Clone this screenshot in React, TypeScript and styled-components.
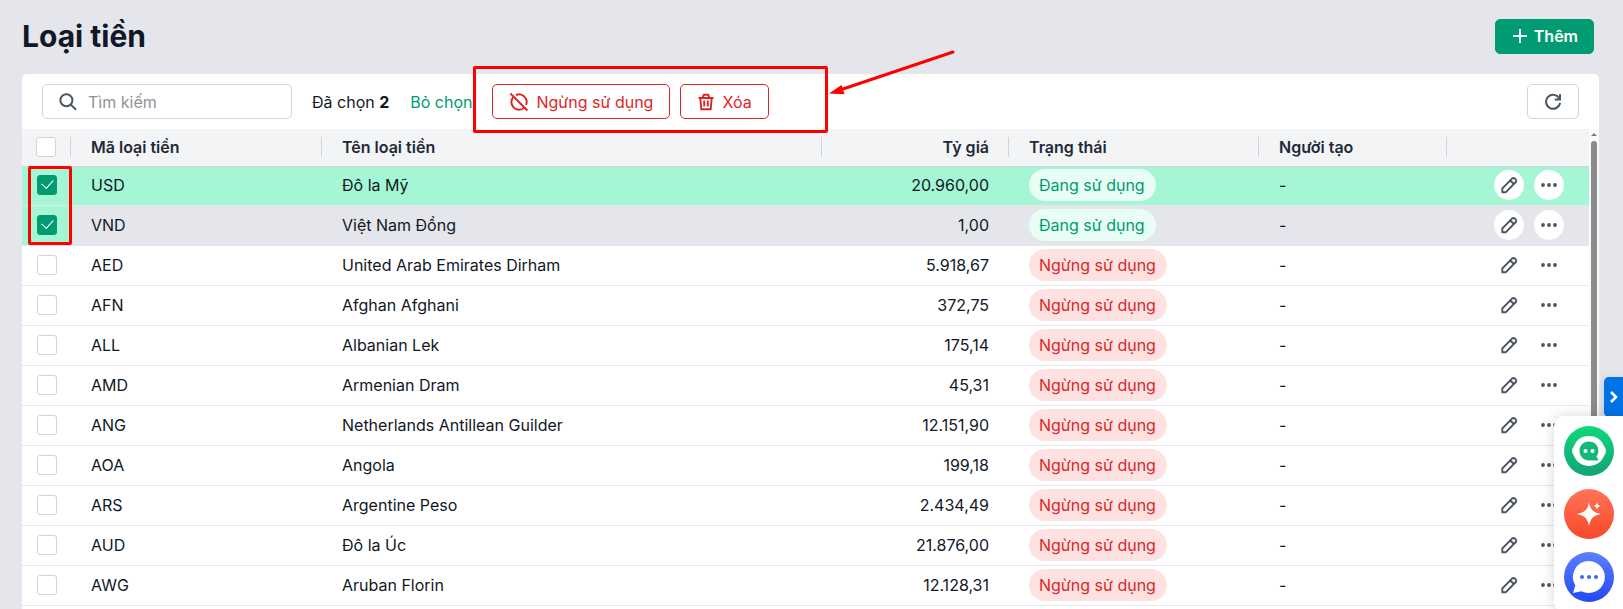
import React, { useState } from 'react';
import styled, { createGlobalStyle, css } from 'styled-components';

const GlobalStyle = createGlobalStyle`
  *, *::before, *::after { box-sizing: border-box; }
  html, body { margin: 0; height: 100%; overflow: hidden; background: #e5e6eb; }
  #root { height: 100%; }
  body, button, input {
    font-family: Inter, "Noto Sans", sans-serif;
    font-size: 16px;
    color: #111827;
  }
`;

const Page = styled.div`
  position: relative;
  display: flex;
  flex-direction: column;
  height: 100%;
  overflow: hidden;
  padding: 0 24px 0 22px;
`;

const PageHeader = styled.header`
  display: flex;
  flex: none;
  align-items: center;
  justify-content: space-between;
  height: 74px;
  padding: 0 5px 2px 0;
`;

const Title = styled.h1`
  margin: 0;
  font-size: 30px;
  line-height: 36px;
  font-weight: 700;
`;

const Button = styled.button<{ $kind: 'primary' | 'danger' | 'plain' }>`
  display: inline-flex;
  align-items: center;
  justify-content: center;
  gap: 7px;
  height: 35px;
  padding: 0 15px;
  border: 1px solid;
  border-radius: 5px;
  background: #fff;
  line-height: 20px;
  cursor: pointer;
  ${({ $kind }) => $kind === 'primary' && css`
    border-color: #009b72;
    background: #009b72;
    color: #fff;
    font-weight: 600;
  `}
  ${({ $kind }) => $kind === 'danger' && css`
    padding: 0 16px;
    border-color: #dc2626;
    color: #dc2626;
  `}
  ${({ $kind }) => $kind === 'plain' && css`
    border-color: #d1d5db;
    color: #4b5563;
  `}
`;

const Panel = styled.main`
  display: flex;
  flex: 1;
  flex-direction: column;
  min-height: 0;
  border-radius: 5px 5px 0 0;
  background: #fff;
  overflow: hidden;
`;

const Toolbar = styled.div`
  display: flex;
  flex: none;
  align-items: center;
  height: 55px;
  padding: 0 20px;
`;

const SearchBox = styled.label`
  display: flex;
  align-items: center;
  gap: 10px;
  width: 250px;
  height: 35px;
  padding: 0 15px;
  border: 1px solid #d1d5db;
  border-radius: 5px;
  color: #4b5563;
`;

const SearchInput = styled.input`
  flex: 1;
  min-width: 0;
  padding: 0;
  border: 0;
  outline: 0;
  background: none;
  &::placeholder { color: #8f9399; opacity: 1; }
`;

const Selection = styled.span`
  margin-left: 20px;
  b { font-weight: 700; }
`;

const ClearLink = styled.a`
  margin: 0 20px 0 21px;
  color: #009b72;
  text-decoration: none;
`;

const BulkActions = styled.div`
  display: flex;
  gap: 10px;
  margin-right: auto;
`;

const Scroller = styled.div`
  display: flex;
  flex: 1;
  min-height: 0;
`;

const TableArea = styled.div`
  flex: 1;
  min-width: 0;
  overflow: hidden;
`;

const Table = styled.table`
  width: 100%;
  table-layout: fixed;
  border-spacing: 0;
`;

const Col = styled.col<{ $width?: number }>`
  ${({ $width }) => $width && `width: ${$width}px;`}
`;

const HeadCell = styled.th<{ $right?: boolean; $check?: boolean; $last?: boolean }>`
  position: relative;
  height: 37px;
  padding: 0 ${({ $check }) => ($check ? '14px' : '20px')} 2px;
  background: #f2f4f6;
  box-shadow: 0 1px #d1d5db;
  color: #1f2937;
  font-weight: 600;
  line-height: 20px;
  text-align: ${({ $right }) => ($right ? 'right' : 'left')};
  white-space: nowrap;
  ${({ $last }) => !$last && css`
    &::after {
      content: '';
      position: absolute;
      top: 8px;
      right: 0;
      width: 1px;
      height: 20px;
      background: #d1d5db;
    }
  `}
`;

const Cell = styled.td<{ $right?: boolean; $check?: boolean }>`
  height: 40px;
  padding: 0 ${({ $check }) => ($check ? '15px' : '20px')} 1px;
  border-bottom: 1px solid #e5e7eb;
  line-height: 20px;
  text-align: ${({ $right }) => ($right ? 'right' : 'left')};
  white-space: nowrap;
`;

const Row = styled.tr<{ $tone?: 'selected' | 'hover' }>`
  ${({ $tone }) => $tone === 'selected' && css`background: #a4f6d4;`}
  ${({ $tone }) => $tone === 'hover' && css`
    background: #e5e6eb;
    ${Cell}:first-child { background: #a4f6d4; }
  `}
`;

const Check = styled.input`
  appearance: none;
  display: block;
  width: 20px;
  height: 20px;
  margin: 0;
  border: 1px solid #d1d5db;
  border-radius: 3px;
  background: #fff;
  &:checked { border-color: #009b72; background: #009b72; }
  &:checked::after {
    content: '';
    display: block;
    width: 7px;
    height: 11px;
    margin: 1px 0 0 6px;
    border: solid #fff;
    border-width: 0 1px 1px 0;
    transform: rotate(42deg);
  }
`;

const Badge = styled.span<{ $active: boolean }>`
  display: block;
  width: max-content;
  padding: 6px 11px 6px 10px;
  border-radius: 16px;
  background: ${({ $active }) => ($active ? '#e8fdf4' : '#fee2e2')};
  color: ${({ $active }) => ($active ? '#009b72' : '#dc2626')};
`;

const RowActions = styled.div`
  display: flex;
  justify-content: flex-end;
  gap: 10px;
  padding-right: 5px;
`;

const IconButton = styled.button`
  display: flex;
  align-items: center;
  justify-content: center;
  width: 30px;
  height: 30px;
  padding: 0;
  border: 0;
  border-radius: 50%;
  background: #fff;
  color: #4b5563;
  cursor: pointer;
`;

const ScrollRail = styled.div`
  display: flex;
  flex: none;
  flex-direction: column;
  align-items: center;
  width: 10px;
  padding-top: 4px;
  gap: 5px;
  background: #fafafa;
`;

const ScrollArrow = styled.span`
  border: 3px solid transparent;
  border-top-width: 0;
  border-bottom-color: #7b7b7b;
`;

const ScrollThumb = styled.div`
  flex: 1;
  width: 6px;
  border-radius: 3px 3px 0 0;
  background: #8b8b8b;
`;

const SideTab = styled.button`
  position: absolute;
  right: 0;
  bottom: 192px;
  display: flex;
  align-items: center;
  justify-content: center;
  width: 19px;
  height: 40px;
  padding: 0;
  border: 0;
  border-radius: 5px 0 0 5px;
  background: #0073e6;
  color: #fff;
  box-shadow: 0 2px 10px rgba(0, 80, 200, 0.2);
`;

const Dock = styled.aside`
  position: absolute;
  right: 0;
  bottom: -3px;
  display: flex;
  flex-direction: column;
  gap: 13px;
  padding: 10px 9px 10px 10px;
  border-radius: 10px 0 0 10px;
  background: #fff;
  box-shadow: 0 0 14px rgba(0, 0, 0, 0.16);
`;

const DockButton = styled.button<{ $from: string; $to: string }>`
  display: block;
  width: 50px;
  height: 50px;
  padding: 0;
  border: 0;
  border-radius: 50%;
  background: linear-gradient(${({ $from, $to }) => `${$from}, ${$to}`});
  svg { display: block; }
`;

const Frame = styled.div<{ $x: number; $y: number; $w: number; $h: number }>`
  position: absolute;
  z-index: 2;
  left: ${({ $x }) => $x}px;
  top: ${({ $y }) => $y}px;
  width: ${({ $w }) => $w}px;
  height: ${({ $h }) => $h}px;
  border: 3px solid #f00;
  border-radius: 2px;
  pointer-events: none;
`;

const Arrow = styled.svg`
  position: absolute;
  left: 826px;
  top: 48px;
  pointer-events: none;
`;

const SearchIcon = () => (
  <svg width="20" height="20" viewBox="0 0 20 20" fill="none" stroke="currentColor" strokeWidth="2">
    <circle cx="8.4" cy="8.2" r="6" />
    <path d="M12.8 12.6 18 17.8" />
  </svg>
);

const PlusIcon = () => (
  <svg width="16" height="16" viewBox="0 0 16 16" stroke="currentColor" strokeWidth="2">
    <path d="M9 1v14M2 8h14" />
  </svg>
);

const BlockIcon = () => (
  <svg width="20" height="20" viewBox="0 0 20 20" fill="none" stroke="currentColor" strokeWidth="1.9">
    <path d="M4.700 4.600A7.500 7.500 0 1 0 15.300 15.600M7 3.100A7.500 7.500 0 0 1 17 12.900M1.400 1.500 18.400 18.500" />
  </svg>
);

const TrashIcon = () => (
  <svg width="18" height="18" viewBox="0 0 18 18" fill="none" stroke="currentColor" strokeWidth="1.9">
    <path d="M1.500 5h15M5.700 5l1-3.200h4.600l1 3.200M3.300 5l1 11.200h9.400L14.700 5M7.200 7.500v6M10.800 7.500v6" />
  </svg>
);

const RefreshIcon = () => (
  <svg width="20" height="18" viewBox="-1 0 20 18" fill="none" stroke="currentColor" strokeWidth="2">
    <path d="M15.300 5.600A7 7 0 1 0 16 9.800M16 1.200v5.200h-5.200" />
  </svg>
);

const PencilIcon = () => (
  <svg width="18" height="18" viewBox="0 0 18 18" fill="none" stroke="currentColor" strokeWidth="1.9" strokeLinejoin="round">
    <path d="M2.300 16.200V12.500L12 2.700a2.100 2.100 0 0 1 3 0l.6.6a2.100 2.100 0 0 1 0 3L5.900 16.200ZM10.300 4.500l3.500 3.500" />
  </svg>
);

const DotsIcon = () => (
  <svg width="16" height="4" viewBox="0 0 16 4" fill="currentColor">
    <circle cx="2" cy="2" r="1.9" />
    <circle cx="8" cy="2" r="1.9" />
    <circle cx="14" cy="2" r="1.9" />
  </svg>
);

const ChevronIcon = () => (
  <svg width="10" height="14" viewBox="0 0 10 14" fill="none" stroke="currentColor" strokeWidth="2.6">
    <path d="M2 2l5 5-5 5" />
  </svg>
);

const SupportIcon = () => (
  <svg width="50" height="50" viewBox="0 0 50 50">
    <path fill="#fff" d="M25 10c6.600 0 12 3.400 14.200 8.400l2.200 4.200c.8 1.500.8 3.300 0 4.800l-2.200 4.200C37 36.600 31.600 40 25 40s-12-3.400-14.200-8.400l-2.200-4.200c-.8-1.500-.8-3.300 0-4.800l2.200-4.200C13 13.400 18.400 10 25 10Z" />
    <path fill="#12b876" d="M25 15.500c5.500 0 9.400 4 9.400 9.300 0 2.300-.7 4.200-1.900 5.800l2 3.900H25c-5.500 0-9.500-4.300-9.500-9.700s4-9.300 9.500-9.300Z" />
    <circle cx="21.500" cy="25" r="2" fill="#fff" />
    <circle cx="28.500" cy="25" r="2" fill="#fff" />
  </svg>
);

const SparkIcon = () => (
  <svg width="50" height="50" viewBox="0 0 50 50" fill="#fff">
    <path d="M25 13.500c1.900 7.600 4 9.800 12 11.500C29 26.800 26.900 29 25 36.800c-1.900-7.800-4-10-12-11.800C21 23.300 23.100 21.100 25 13.500Z" />
    <path d="M33 13.500c.7 2.200 1.300 2.900 3.500 3.500-2.200.7-2.800 1.300-3.500 3.500-.7-2.200-1.300-2.800-3.500-3.500 2.200-.6 2.800-1.300 3.500-3.500Z" />
  </svg>
);

const ChatIcon = () => (
  <svg width="50" height="50" viewBox="0 0 50 50">
    <path fill="#fff" d="M25 9a16 16 0 1 1-7.500 30.200L9 41l2.300-7.600A16 16 0 0 1 25 9Z" />
    <g fill="#4164f5">
      <circle cx="18" cy="25" r="2" />
      <circle cx="25" cy="25" r="2" />
      <circle cx="32" cy="25" r="2" />
    </g>
  </svg>
);

interface Currency {
  code: string;
  name: string;
  rate: string;
  active?: boolean;
}

const currencies: Currency[] = [
  { code: 'USD', name: 'Đô la Mỹ', rate: '20.960,00', active: true },
  { code: 'VND', name: 'Việt Nam Đồng', rate: '1,00', active: true },
  { code: 'AED', name: 'United Arab Emirates Dirham', rate: '5.918,67' },
  { code: 'AFN', name: 'Afghan Afghani', rate: '372,75' },
  { code: 'ALL', name: 'Albanian Lek', rate: '175,14' },
  { code: 'AMD', name: 'Armenian Dram', rate: '45,31' },
  { code: 'ANG', name: 'Netherlands Antillean Guilder', rate: '12.151,90' },
  { code: 'AOA', name: 'Angola', rate: '199,18' },
  { code: 'ARS', name: 'Argentine Peso', rate: '2.434,49' },
  { code: 'AUD', name: 'Đô la Úc', rate: '21.876,00' },
  { code: 'AWG', name: 'Aruban Florin', rate: '12.128,31' },
];

const tones: Record<string, 'selected' | 'hover'> = { USD: 'selected', VND: 'hover' };

export default function App() {
  const [selected, setSelected] = useState<string[]>(['USD', 'VND']);
  const toggle = (code: string) =>
    setSelected((list) => (list.includes(code) ? list.filter((c) => c !== code) : [...list, code]));

  return (
    <Page>
      <GlobalStyle />
      <PageHeader>
        <Title>Loại tiền</Title>
        <Button $kind="primary"><PlusIcon />Thêm</Button>
      </PageHeader>
      <Panel>
        <Toolbar>
          <SearchBox>
            <SearchIcon />
            <SearchInput type="text" placeholder="Tìm kiếm" aria-label="Tìm kiếm" />
          </SearchBox>
          <Selection>Đã chọn <b>{selected.length}</b></Selection>
          <ClearLink href="#" onClick={() => setSelected([])}>Bỏ chọn</ClearLink>
          <BulkActions>
            <Button $kind="danger"><BlockIcon />Ngừng sử dụng</Button>
            <Button $kind="danger"><TrashIcon />Xóa</Button>
          </BulkActions>
          <Button $kind="plain" aria-label="Tải lại"><RefreshIcon /></Button>
        </Toolbar>
        <Scroller>
          <TableArea>
            <Table>
              <colgroup>
                <Col $width={49} />
                <Col $width={251} />
                <Col />
                <Col $width={187} />
                <Col $width={250} />
                <Col $width={188} />
                <Col $width={142} />
              </colgroup>
              <thead>
                <tr>
                  <HeadCell $check><Check type="checkbox" aria-label="Chọn tất cả" /></HeadCell>
                  <HeadCell>Mã loại tiền</HeadCell>
                  <HeadCell>Tên loại tiền</HeadCell>
                  <HeadCell $right>Tỷ giá</HeadCell>
                  <HeadCell>Trạng thái</HeadCell>
                  <HeadCell>Người tạo</HeadCell>
                  <HeadCell $last aria-label="Thao tác" />
                </tr>
              </thead>
              <tbody>
                {currencies.map(({ code, name, rate, active }) => (
                  <Row key={code} $tone={selected.includes(code) ? tones[code] ?? 'selected' : undefined}>
                    <Cell $check>
                      <Check
                        type="checkbox"
                        aria-label={code}
                        checked={selected.includes(code)}
                        onChange={() => toggle(code)}
                      />
                    </Cell>
                    <Cell>{code}</Cell>
                    <Cell>{name}</Cell>
                    <Cell $right>{rate}</Cell>
                    <Cell><Badge $active={!!active}>{active ? 'Đang sử dụng' : 'Ngừng sử dụng'}</Badge></Cell>
                    <Cell>-</Cell>
                    <Cell>
                      <RowActions>
                        <IconButton aria-label="Sửa"><PencilIcon /></IconButton>
                        <IconButton aria-label="Thêm thao tác"><DotsIcon /></IconButton>
                      </RowActions>
                    </Cell>
                  </Row>
                ))}
              </tbody>
            </Table>
          </TableArea>
          <ScrollRail>
            <ScrollArrow />
            <ScrollThumb />
          </ScrollRail>
        </Scroller>
      </Panel>
      <SideTab aria-label="Mở rộng"><ChevronIcon /></SideTab>
      <Dock>
        <DockButton $from="#0fd87c" $to="#12a374" aria-label="Hỗ trợ"><SupportIcon /></DockButton>
        <DockButton $from="#ff7358" $to="#f8482a" aria-label="Trợ lý AI"><SparkIcon /></DockButton>
        <DockButton $from="#5c80ff" $to="#2349f5" aria-label="Trò chuyện"><ChatIcon /></DockButton>
      </Dock>
      <Frame $x={473} $y={66} $w={355} $h={67} />
      <Frame $x={28} $y={166} $w={44} $h={79} />
      <Arrow width="132" height="52" viewBox="0 0 132 52">
        <path d="M127 4 14 42" stroke="#f00" strokeWidth="3" strokeLinecap="round" />
        <path d="M3 45.500 15.500 37l3 9.200Z" fill="#f00" />
      </Arrow>
    </Page>
  );
}
